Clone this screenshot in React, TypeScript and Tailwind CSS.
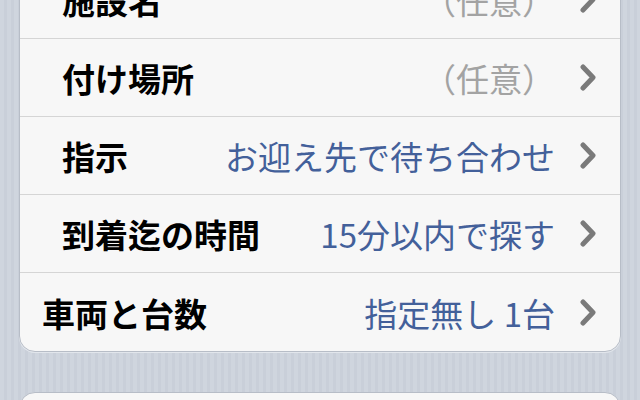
import React from "react";

const Chevron = () => (
  <svg width="17" height="27" viewBox="0 0 17 27" className="shrink-0">
    <polyline points="3,3 13,13.5 3,24" fill="none" stroke="#7a7a7a" strokeWidth="5" strokeLinecap="round" strokeLinejoin="round" />
  </svg>
);

type Row = { label: string; value: string; kind: "gray" | "blue"; indent: boolean };

const rows: Row[] = [
  { label: "施設名", value: "（任意）", kind: "gray", indent: true },
  { label: "付け場所", value: "（任意）", kind: "gray", indent: true },
  { label: "指示", value: "お迎え先で待ち合わせ", kind: "blue", indent: true },
  { label: "到着迄の時間", value: "15分以内で探す", kind: "blue", indent: true },
  { label: "車両と台数", value: "指定無し 1台", kind: "blue", indent: false },
];

export default function App() {
  return (
    <div
      className="w-[640px] h-[400px] overflow-hidden bg-[repeating-linear-gradient(90deg,#cfd5de_0px,#cfd5de_4px,#c9cfd9_4px,#c9cfd9_7px)]"
      style={{ fontFamily: '"Noto Sans CJK JP", "Noto Sans", sans-serif' }}
    >
      <div className="mx-[19px] mt-[-40px] rounded-[16px] bg-[#f7f7f7] border border-[#b7bdc7] shadow-[0_1px_0_#e2e6ec] overflow-hidden">
        {rows.map((r, i) => (
          <div
            key={i}
            className={`flex items-center h-[78px] pr-[23px] ${i < rows.length - 1 ? "border-b border-[#d5d5d5]" : ""} ${r.indent ? "pl-[42px]" : "pl-[22px]"}`}
          >
            <span className="text-[33px] leading-none font-bold text-black pt-[2px]">{r.label}</span>
            <span
              className={`ml-auto mr-[25px] text-[33px] leading-none pt-[2px] ${r.kind === "gray" ? "text-[#a3a3a3]" : "text-[#43609a]"}`}
            >
              {r.value}
            </span>
            <Chevron />
          </div>
        ))}
      </div>
      <div className="mx-[19px] mt-[40px] h-[40px] rounded-t-[16px] bg-[#f7f7f7] border border-[#b7bdc7]" />
    </div>
  );
}
